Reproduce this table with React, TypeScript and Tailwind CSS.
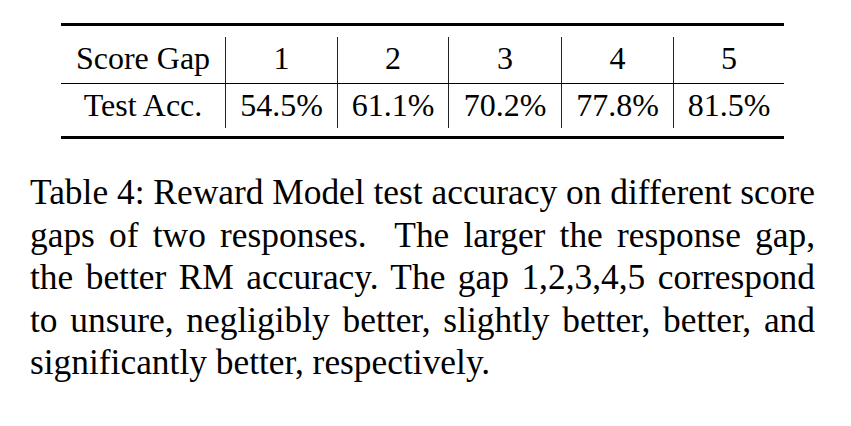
const cols = "grid grid-cols-[164px_112px_111px_113px_112px_111px]";

const header = ["Score Gap", "1", "2", "3", "4", "5"];
const values = ["Test Acc.", "54.5%", "61.1%", "70.2%", "77.8%", "81.5%"];

const lines = [
  "Table 4: Reward Model test accuracy on different score",
  "gaps of two responses.\u00a0 The larger the response gap,",
  "the better RM accuracy. The gap 1,2,3,4,5 correspond",
  "to unsure, negligibly better, slightly better, better, and",
];

const Row = ({ cells, h }: { cells: string[]; h: string }) => (
  <div className={cols}>
    {cells.map((c, i) => (
      <div
        key={i}
        className={`${h} text-center leading-[42px] ${i > 0 ? "border-l border-[#222]" : ""}`}
      >
        {c}
      </div>
    ))}
  </div>
);

const App = () => {
  return (
    <div
      className="w-[851px] h-[426px] bg-white text-black pl-[30px] pt-[23px] overflow-hidden"
      style={{ fontFamily: '"Liberation Serif", "Times New Roman", serif' }}
    >
      <div className="ml-[31px] w-[723px] text-[32px]">
        <div className="h-[3px] bg-black" />
        <div className="pt-[11px]">
          <div className={cols}>
            {header.map((c, i) => (
              <div
                key={i}
                className={`h-[46px] text-center leading-[42px] ${i > 0 ? "border-l border-[#222]" : ""}`}
              >
                {c}
              </div>
            ))}
          </div>
        </div>
        <div className="h-px bg-black" />
        <div className="pb-[8px]">
          <Row cells={values} h="h-[44px]" />
        </div>
        <div className="h-[3px] bg-black" />
      </div>

      <div className="mt-[32px] w-[785px] text-[35.4px] leading-[42.5px]">
        {lines.map((l, i) => (
          <div key={i} className="text-justify [text-align-last:justify]">
            {l}
          </div>
        ))}
        <div>significantly better, respectively.</div>
      </div>
    </div>
  );
};

export default App;
